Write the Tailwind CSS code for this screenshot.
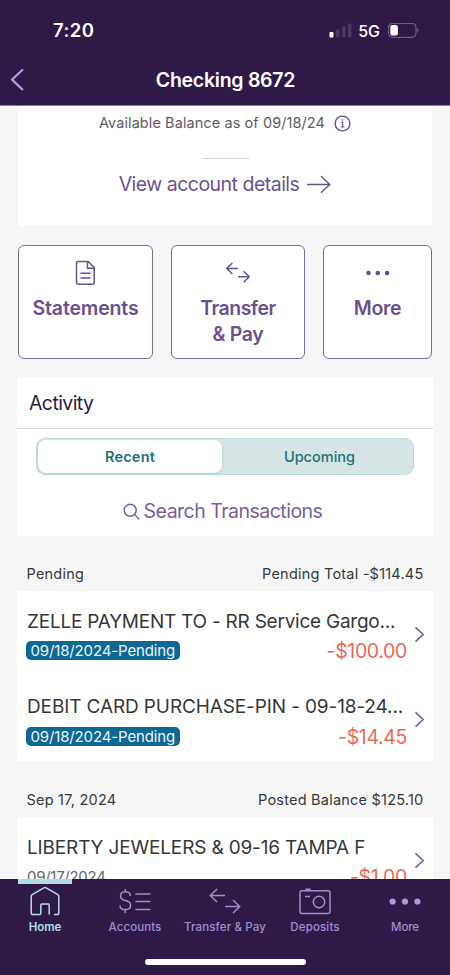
<!DOCTYPE html>
<html lang="en">
<head>
<meta charset="utf-8">
<title>Checking 8672</title>
<script src="https://cdn.jsdelivr.net/npm/@tailwindcss/browser@4"></script>
</head>
<body class="w-[450px] h-[975px] overflow-hidden flex flex-col bg-[#f6f6f7] font-['Inter',sans-serif] text-[#38383a] whitespace-nowrap">

<header class="h-[106px] shrink-0 bg-[#2f1a47] border-b border-[#8d7ba3] text-white flex flex-col">
  <div class="h-[61px] shrink-0 flex items-center justify-between pl-[53px] pr-[30px]">
    <span class="text-[18.5px] font-semibold tracking-[0.4px] leading-none">7:20</span>
    <div class="flex items-center">
      <svg class="w-[24px] h-[16px]" viewBox="0 0 24 16"><rect x="0.5" y="9" width="4" height="5.5" rx="1" fill="#fff"/><g fill="#4b3862"><rect x="7" y="6.500" width="3.500" height="8" rx="1"/><rect x="13" y="3.500" width="3.500" height="11" rx="1"/><rect x="19" y="0.500" width="3.500" height="14" rx="1"/></g></svg>
      <span class="text-[16px] font-medium leading-none ml-[5px]">5G</span>
      <svg class="w-[33px] h-[16px] ml-[7px]" viewBox="0 0 33 16"><rect x="1.5" y="0.3" width="27.500" height="14" rx="4.2" fill="none" stroke="#6c5d80" stroke-width="1.2"/><rect x="3.300" y="2.100" width="7.600" height="10.400" rx="2" fill="#fff"/><path d="M30.300 5.100q2.400 2.200 0 4.400z" fill="#7f7190"/></svg>
    </div>
  </div>
  <div class="h-[38px] flex items-center">
    <svg class="w-[16px] h-[24px] ml-[9px]" viewBox="0 0 16 24" fill="none" stroke="#a79ce0" stroke-width="2.3" stroke-linecap="round" stroke-linejoin="round"><path d="M13.3 2 3 11.700l10.300 9.700"/></svg>
    <h1 class="flex-1 text-center text-[19.5px] font-semibold tracking-[-0.26px] pr-[24px] pt-[2px]">Checking 8672</h1>
  </div>
</header>

<main class="h-[773px] shrink-0 overflow-hidden flex flex-col">
  <section class="mx-[18px] h-[120px] shrink-0 bg-white flex flex-col items-center pt-[7px]">
    <div class="flex items-center h-5 text-[14.5px] tracking-[0.08px] text-[#5e5d61]">
      <span>Available Balance as of 09/18/24</span>
      <svg class="w-[17px] h-[17px] ml-[9px]" viewBox="0 0 17 17" fill="none" stroke="#6a5291" stroke-width="1.4"><circle cx="8.5" cy="8.5" r="7.4"/><path d="M7 7.4h1.700v4.400M6.800 12h3.600" stroke-width="1.2"/><circle cx="8.5" cy="4.900" r=".5" fill="#6a5291" stroke-width=".8"/></svg>
    </div>
    <div class="w-[47px] h-px bg-[#d6d5d8] mt-[25px]"></div>
    <div class="flex items-center h-6 mt-[14px] text-[19.5px] tracking-[-0.51px] text-[#6a5291]">
      <span>View account details</span>
      <svg class="w-[25px] h-[20px] ml-[7px]" viewBox="0 0 25 20" fill="none" stroke="#6a5291" stroke-width="1.4"><path d="M1 9.500h22.500M15 1.300l8.800 8.200-8.800 8.200"/></svg>
    </div>
  </section>

  <section class="mt-[19px] mx-[18px] h-[114px] shrink-0 flex justify-between text-[#6a5291] text-[19.5px] leading-[26px] font-semibold text-center">
    <div class="w-[135px] rounded-[6px] border-[1.5px] border-[#7d6b9c] bg-white flex flex-col items-center pt-[14px]">
      <svg class="w-[21px] h-[26px]" viewBox="0 0 21 26" fill="none" stroke="#6a5291" stroke-width="1.5" stroke-linejoin="round"><path d="M3 1.500h10.200l6 6V22.700a1.500 1.500 0 0 1-1.500 1.500H3A1.500 1.500 0 0 1 1.500 22.700V3A1.500 1.500 0 0 1 3 1.500zM12.500 1.500v6.700h6.700M5.500 13.300h10M5.500 18h10"/></svg>
      <span class="mt-[9px] tracking-[-0.15px]">Statements</span>
    </div>
    <div class="w-[134px] rounded-[6px] border-[1.5px] border-[#7d6b9c] bg-white flex flex-col items-center pt-[14px]">
      <svg class="w-[26px] h-[26px]" viewBox="0 0 26 26" fill="none" stroke="#6a5291" stroke-width="1.500"><path d="M13 8.500H2M7.300 3 1.800 8.500 7.300 14M13 16.800h11M18.700 11.300l5.500 5.500-5.500 5.500"/></svg>
      <span class="mt-[9px] tracking-[-0.52px]">Transfer</span>
      <span class="tracking-[-0.35px]">&amp; Pay</span>
    </div>
    <div class="w-[109px] rounded-[6px] border-[1.5px] border-[#7d6b9c] bg-white flex flex-col items-center pt-[14px]">
      <svg class="w-[26px] h-[26px]" viewBox="0 0 26 26" fill="#6a5291"><circle cx="3.500" cy="13" r="2.300"/><circle cx="12.800" cy="13" r="2.300"/><circle cx="22.100" cy="13" r="2.300"/></svg>
      <span class="mt-[9px] tracking-[-0.3px]">More</span>
    </div>
  </section>

  <section class="mt-[18px] mx-[17px] h-[159px] shrink-0 bg-white flex flex-col">
    <h2 class="h-[52px] shrink-0 border-b border-[#d9d9dc] flex items-center pt-[3px] pl-[12px] text-[19.5px] tracking-[-0.6px] text-[#2d1c42]">Activity</h2>
    <div class="mt-[9px] mx-[19px] h-[37px] shrink-0 rounded-[9px] bg-[#d6e4e5] border-[1.5px] border-[#b9dddd] p-px pr-0 flex text-[14.5px] text-[#1b7373]">
      <div class="w-[184px] rounded-[8px] bg-white shadow-sm flex items-center justify-center font-semibold tracking-[0.2px]">Recent</div>
      <div class="flex-1 flex items-center justify-center font-medium pl-[4px] tracking-[0.02px]">Upcoming</div>
    </div>
    <div class="flex-1 flex items-center justify-center text-[19.5px] tracking-[-0.51px] text-[#78609a] pr-[5px] pt-[12px]">
      <svg class="w-[17px] h-[17px] mr-[4px]" viewBox="0 0 17 17" fill="none" stroke="#78609a" stroke-width="1.500"><circle cx="7.200" cy="7.200" r="6"/><path d="m11.500 11.500 4.700 4.700"/></svg>
      <span>Search Transactions</span>
    </div>
  </section>

  <div class="h-[55px] shrink-0 flex justify-between items-center pt-[21px] pl-[26.500px] pr-[26.500px] text-[14.5px] tracking-[0.22px]"><span>Pending</span><span>Pending Total -$114.45</span></div>

  <section class="mx-[17px] h-[171px] shrink-0 bg-white">
    <div class="h-[85.500px] flex items-center pl-[9px] pr-[8px]">
      <div class="w-[381px] pt-[4px]">
        <div class="h-[24px] leading-[24px] text-[19px] pl-px pt-px tracking-[-0.24px]">ZELLE PAYMENT TO - RR Service Gargo...</div>
        <div class="flex items-center justify-between mt-[6px] h-[24px]">
          <span class="h-[19px] w-[154px] rounded-[5px] bg-[#0f6793] text-[#eaf6fb] text-[15px] leading-[19px] tracking-[-0.14px] pl-[4.500px]">09/18/2024-Pending</span>
          <span class="text-[19.5px] tracking-[-0.35px] text-[#ea6a58] pt-[2px]">-$100.00</span>
        </div>
      </div>
      <svg class="w-[11px] h-[17px] ml-[7px] mt-[2px]" viewBox="0 0 11 17" fill="none" stroke="#7560a0" stroke-width="1.600"><path d="m1.500 1.300 7.700 7.200-7.700 7.200"/></svg>
    </div>
    <div class="h-[85.500px] flex items-center pl-[9px] pr-[8px]">
      <div class="w-[381px] pt-[4px]">
        <div class="h-[24px] leading-[24px] text-[19px] pl-px pt-px tracking-[-0.12px]">DEBIT CARD PURCHASE-PIN - 09-18-24...</div>
        <div class="flex items-center justify-between mt-[6px] h-[24px]">
          <span class="h-[19px] w-[154px] rounded-[5px] bg-[#0f6793] text-[#eaf6fb] text-[15px] leading-[19px] tracking-[-0.14px] pl-[4.500px]">09/18/2024-Pending</span>
          <span class="text-[19.5px] tracking-[-0.35px] text-[#ea6a58] pt-[2px]">-$14.45</span>
        </div>
      </div>
      <svg class="w-[11px] h-[17px] ml-[7px] mt-px" viewBox="0 0 11 17" fill="none" stroke="#7560a0" stroke-width="1.600"><path d="m1.500 1.300 7.700 7.200-7.700 7.200"/></svg>
    </div>
  </section>

  <div class="h-[55px] shrink-0 flex justify-between items-center pt-[21px] pl-[26.500px] pr-[26.500px] text-[14.5px] tracking-[0.22px]"><span>Sep 17, 2024</span><span>Posted Balance $125.10</span></div>

  <section class="mx-[17px] h-[171px] shrink-0 bg-white">
    <div class="h-[85.500px] flex items-center pl-[9px] pr-[8px]">
      <div class="w-[381px] pt-[4px]">
        <div class="h-[24px] leading-[24px] text-[19px] pl-px pt-px tracking-[-0.16px]">LIBERTY JEWELERS &amp; 09-16 TAMPA F</div>
        <div class="flex items-center justify-between mt-[6px] h-[24px]">
          <span class="text-[15px] tracking-[-0.28px] text-[#66666a] pl-px">09/17/2024</span>
          <span class="text-[19.5px] tracking-[-0.36px] text-[#ea6a58] pt-[2px]">-$1.00</span>
        </div>
      </div>
      <svg class="w-[11px] h-[17px] ml-[7px] mt-[2px]" viewBox="0 0 11 17" fill="none" stroke="#7560a0" stroke-width="1.600"><path d="m1.500 1.300 7.700 7.200-7.700 7.200"/></svg>
    </div>
  </section>
</main>

<nav class="relative h-[96px] shrink-0 bg-[#2f1a47] flex flex-col items-center">
  <div class="absolute left-[18px] top-0 w-[54px] h-[5px] bg-[#b0dce2]"></div>
  <div class="w-full h-[57px] grid grid-cols-5 text-[11.5px] leading-[14px] font-medium text-[#9d90d0] text-center">
    <div class="flex flex-col items-center text-[#b5dfe5]">
      <svg class="w-[30px] h-[30px] mt-[7px]" viewBox="0 0 30 30" fill="none" stroke="#b5dfe5" stroke-width="1.500" stroke-linejoin="round"><path d="M10.800 19.500V27.500q0 1-1 1H3q-1.800 0-1.800-1.800V10.500q0-1.200 1-1.900L13.800 1.900q1.200-.8 2.400 0L27.800 8.600q1 .7 1 1.900v16.200q0 1.800-1.800 1.800h-3M10.800 27V19q0-1 1-1h6.400q1 0 1 1v9.500"/></svg>
      <span class="mt-[4px] font-semibold tracking-[-0.1px]">Home</span>
    </div>
    <div class="flex flex-col items-center">
      <svg class="w-[32px] h-[30px] mt-[7px]" viewBox="0 0 32 30" fill="none" stroke="#9d90d0" stroke-width="1.500"><path d="M6.300 3v3M6.300 23.500v3.500M11.300 10q0-4.200-5-4.200-4.800 0-4.800 4.200 0 3.400 4.800 4.600 5.300 1.300 5.300 4.600 0 4.400-5.300 4.400-5.300 0-5.300-4.200M16.500 8h15M16.500 15.500h15M16.500 23.500h15"/></svg>
      <span class="mt-[4px] tracking-[0.08px]">Accounts</span>
    </div>
    <div class="flex flex-col items-center">
      <svg class="w-[32px] h-[30px] mt-[7px]" viewBox="0 0 32 30" fill="none" stroke="#9d90d0" stroke-width="1.500"><path d="M16 9.500H1.500M8 3 1.300 9.500 8 16M16 20.500h14.500M24 14l6.700 6.500L24 27"/></svg>
      <span class="mt-[4px] tracking-[0.12px]">Transfer &amp; Pay</span>
    </div>
    <div class="flex flex-col items-center">
      <svg class="w-[32px] h-[30px] mt-[7px]" viewBox="0 0 32 30" fill="none" stroke="#9d90d0" stroke-width="1.500"><rect x="1" y="4.800" width="30" height="22.700" rx="2"/><path d="M6.500 3.600h5" stroke-width="2.200"/><path d="M6 10.500h5"/><circle cx="20" cy="16" r="5.700"/></svg>
      <span class="mt-[4px] tracking-[0.15px]">Deposits</span>
    </div>
    <div class="flex flex-col items-center">
      <svg class="w-[32px] h-[30px] mt-[7px]" viewBox="0 0 32 30" fill="#a79ce0"><circle cx="3.600" cy="15.500" r="3.100"/><circle cx="16" cy="15.500" r="3.100"/><circle cx="28.400" cy="15.500" r="3.100"/></svg>
      <span class="mt-[4px] tracking-[-0.1px]">More</span>
    </div>
  </div>
  <div class="mt-[23px] w-[161px] h-[6px] rounded-full bg-white"></div>
</nav>
</body>
</html>
